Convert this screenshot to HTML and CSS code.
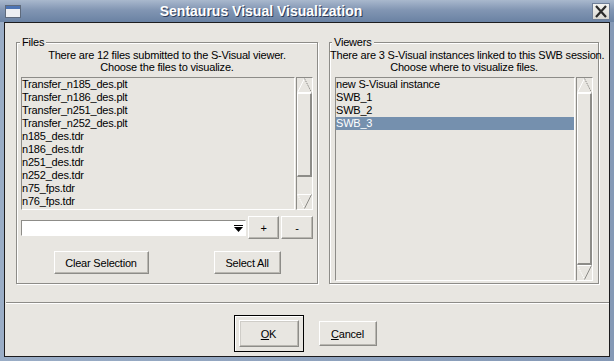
FILE: index.html
```html
<!DOCTYPE html>
<html lang="en">
<head>
  <meta charset="UTF-8" />
  <title>Sentaurus Visual Visualization</title>
  <link rel="stylesheet" href="styles.css">
</head>
<body>

  <div class="window">
    <div class="titlebar">
      <svg class="app-icon" width="16" height="13" viewBox="0 0 16 13">
        <rect x="0.5" y="0.5" width="15" height="12" fill="#eceef2" stroke="#5e6a7c"/>
        <rect x="1" y="1" width="14" height="3" fill="#4d74b4"/>
      </svg>
      <div class="title">Sentaurus Visual Visualization</div>
      <div class="close">
        <svg width="16" height="15" viewBox="0 0 16 15">
          <path d="M3 2 L13 13 M13 2 L3 13" stroke="#2b2b2b" stroke-width="2.2" fill="none"/>
        </svg>
      </div>
    </div>

    <div class="client">
      <div class="panes">

        <div class="group files">
          <div class="group-title">Files</div>
          <p class="desc">There are 12 files submitted to the S-Visual viewer.<br>Choose the files to visualize.</p>
          <div class="listrow">
            <ul class="listbox">
              <li>Transfer_n185_des.plt</li>
              <li>Transfer_n186_des.plt</li>
              <li>Transfer_n251_des.plt</li>
              <li>Transfer_n252_des.plt</li>
              <li>n185_des.tdr</li>
              <li>n186_des.tdr</li>
              <li>n251_des.tdr</li>
              <li>n252_des.tdr</li>
              <li>n75_fps.tdr</li>
              <li>n76_fps.tdr</li>
            </ul>
            <div class="scrollbar">
              <svg class="arrow" width="15" height="15" viewBox="0 0 15 15">
                <path d="M0.5 14.5 L7.5 0.5 M0.5 14.5 H14.5" stroke="#fff" fill="none"/>
                <path d="M7.5 0.5 L14.5 14.5" stroke="#8d8c88" stroke-dasharray="1.5 1" fill="none"/>
              </svg>
              <div class="thumb" style="height: 84px"></div>
              <div class="trough-space"></div>
              <svg class="arrow" width="15" height="15" viewBox="0 0 15 15">
                <path d="M0.5 0.5 H14.5" stroke="#fff" fill="none"/>
                <path d="M0.5 0.5 L7.5 14.5" stroke="#fff" stroke-dasharray="1.5 1" fill="none"/>
                <path d="M14.5 0.5 L7.5 14.5" stroke="#8d8c88" fill="none"/>
              </svg>
            </div>
          </div>

          <div class="combo-row">
            <div class="combo">
              <svg class="combo-arrow" width="9" height="7" viewBox="0 0 9 7">
                <path d="M0 0.5 H9" stroke="#000"/>
                <path d="M0 2 H9 L4.5 7 Z" fill="#000"/>
              </svg>
            </div>
            <button class="btn small">+</button>
            <button class="btn small minus">-</button>
          </div>

          <div class="action-row">
            <button class="btn clear">Clear Selection</button>
            <button class="btn select-all">Select All</button>
          </div>
        </div>

        <div class="group viewers">
          <div class="group-title">Viewers</div>
          <p class="desc">There are 3 S-Visual instances linked to this SWB session.<br>Choose where to visualize files.</p>
          <div class="listrow">
            <ul class="listbox">
              <li>new S-Visual instance</li>
              <li>SWB_1</li>
              <li>SWB_2</li>
              <li class="selected">SWB_3</li>
            </ul>
            <div class="scrollbar">
              <svg class="arrow" width="15" height="15" viewBox="0 0 15 15">
                <path d="M0.5 14.5 L7.5 0.5 M0.5 14.5 H14.5" stroke="#fff" fill="none"/>
                <path d="M7.5 0.5 L14.5 14.5" stroke="#8d8c88" stroke-dasharray="1.5 1" fill="none"/>
              </svg>
              <div class="thumb full"></div>
              <svg class="arrow" width="15" height="15" viewBox="0 0 15 15">
                <path d="M0.5 0.5 H14.5" stroke="#fff" fill="none"/>
                <path d="M0.5 0.5 L7.5 14.5" stroke="#fff" stroke-dasharray="1.5 1" fill="none"/>
                <path d="M14.5 0.5 L7.5 14.5" stroke="#8d8c88" fill="none"/>
              </svg>
            </div>
          </div>
        </div>

      </div>

      <div class="separator"></div>

      <div class="dialog-buttons">
        <div class="default-ring">
          <button class="btn ok"><u>O</u>K</button>
        </div>
        <button class="btn cancel"><u>C</u>ancel</button>
      </div>
    </div>
  </div>

</body>
</html>
```

FILE: styles.css
```css
*, *::before, *::after {
  box-sizing: border-box;
}

:root {
  --face: #e8e6e1;
  --shade: #8d8c88;
  --light: #ffffff;
  --select: #7590ae;
}

body {
  margin: 0;
  font-family: 'Liberation Sans', Arial, sans-serif;
  font-size: 11px;
  letter-spacing: -0.2px;
  color: #000;
}

.window {
  width: 614px;
  height: 361px;
  display: flex;
  flex-direction: column;
  background: linear-gradient(90deg, #9aadc6, #8599b6);
}

/* title bar */
.titlebar {
  height: 22px;
  flex: none;
  display: flex;
  align-items: center;
  padding: 0 4px 0 5px;
  background: linear-gradient(#a9b8cd, #8296b3 45%, #6a82a3);
}

.app-icon {
  flex: none;
  margin-top: 1px;
}

.title {
  flex: 1;
  text-align: center;
  padding-right: 91px;
  font-family: 'Liberation Sans', Arial, sans-serif;
  font-weight: bold;
  font-size: 14px;
  letter-spacing: 0;
  color: #fff;
  text-shadow: 1px 1px 0 #2d3c58;
}

.close {
  width: 18px;
  height: 17px;
  flex: none;
  display: flex;
  align-items: center;
  justify-content: center;
  background: linear-gradient(#f3f3f0, #d9d8d3);
  border: 1px solid #6f7f98;
}

/* dialog body */
.client {
  flex: 1;
  margin: 0 4px 4px;
  border: 1px solid #1c1c1e;
  background: var(--face);
  display: flex;
  flex-direction: column;
}

.panes {
  display: flex;
  gap: 11px;
  padding: 19px 10px 0 11px;
}

.group {
  border: 1px solid var(--shade);
  box-shadow: inset 1px 1px 0 var(--light), 1px 1px 0 var(--light);
  display: flex;
  flex-direction: column;
}

.files {
  flex: none;
  width: 302px;
  padding: 0 4px 9px;
}

.viewers {
  flex: 1;
  min-width: 0;
  padding: 0 5px 2px;
}

.group-title {
  width: max-content;
  margin: -7px 0 0 -1px;
  padding: 0 2px;
  line-height: 13px;
  background: var(--face);
}

.viewers .group-title {
  margin-left: -3px;
}

.desc {
  margin: 0 -5px;
  text-align: center;
  line-height: 12px;
  white-space: nowrap;
}

.listrow {
  display: flex;
  gap: 1px;
  margin-top: 4px;
}

.files .listrow {
  height: 133px;
}

.viewers .listrow {
  flex: 1;
}

.listbox {
  flex: 1;
  min-width: 0;
  margin: 0;
  padding: 0;
  list-style: none;
  border: 1px solid;
  border-color: var(--shade) var(--light) var(--light) var(--shade);
  overflow: hidden;
}

.listbox li {
  height: 13px;
  line-height: 13px;
  padding-left: 0;
  white-space: nowrap;
}

.listbox li.selected {
  background: var(--select);
  color: #fff;
}

.scrollbar {
  width: 17px;
  flex: none;
  display: flex;
  flex-direction: column;
  border: 1px solid;
  border-color: var(--shade) var(--light) var(--light) var(--shade);
}

.arrow {
  display: block;
  flex: none;
}

.thumb {
  flex: none;
  border: 1px solid;
  border-color: var(--light) var(--shade) var(--shade) var(--light);
  border-right-width: 2px;
  border-bottom-width: 2px;
}

.thumb.full {
  flex: 1;
}

.trough-space {
  flex: 1;
}

/* combo and small buttons */
.combo-row {
  display: flex;
  align-items: center;
  gap: 2px;
  margin-top: 6px;
}

.combo {
  flex: 1;
  height: 16px;
  background: #fff;
  border: 1px solid;
  border-color: var(--shade) var(--light) var(--light) var(--shade);
  display: flex;
  align-items: center;
  justify-content: flex-end;
  padding-right: 2px;
}

.combo-arrow {
  margin-top: 2px;
}

.btn {
  font: inherit;
  letter-spacing: inherit;
  color: #000;
  background: var(--face);
  border: 1px solid;
  border-color: var(--light) var(--shade) var(--shade) var(--light);
  box-shadow: inset -1px -1px 0 #b9b7b1;
  padding: 0;
  height: 23px;
}

.small {
  flex: none;
  width: 31px;
}

.minus {
  width: 32px;
}

.action-row {
  display: flex;
  justify-content: space-around;
  margin-top: 12px;
}

.clear {
  width: 95px;
}

.select-all {
  width: 67px;
}

.separator {
  height: 2px;
  margin: 18px 0 0 1px;
  border-top: 1px solid var(--shade);
  border-bottom: 1px solid var(--light);
}

.dialog-buttons {
  display: flex;
  align-items: center;
  justify-content: center;
  gap: 15px;
  margin-top: 11px;
  padding-right: 4px;
}

.default-ring {
  border: 1px solid #000;
  padding: 4px;
  box-shadow: inset 1px 1px 0 var(--light);
}

.ok {
  width: 60px;
  height: 27px;
  box-shadow: inset -1px -1px 0 #b9b7b1, inset 1px 1px 0 #cfcdc8;
}

.cancel {
  width: 58px;
  height: 25px;
}
```
